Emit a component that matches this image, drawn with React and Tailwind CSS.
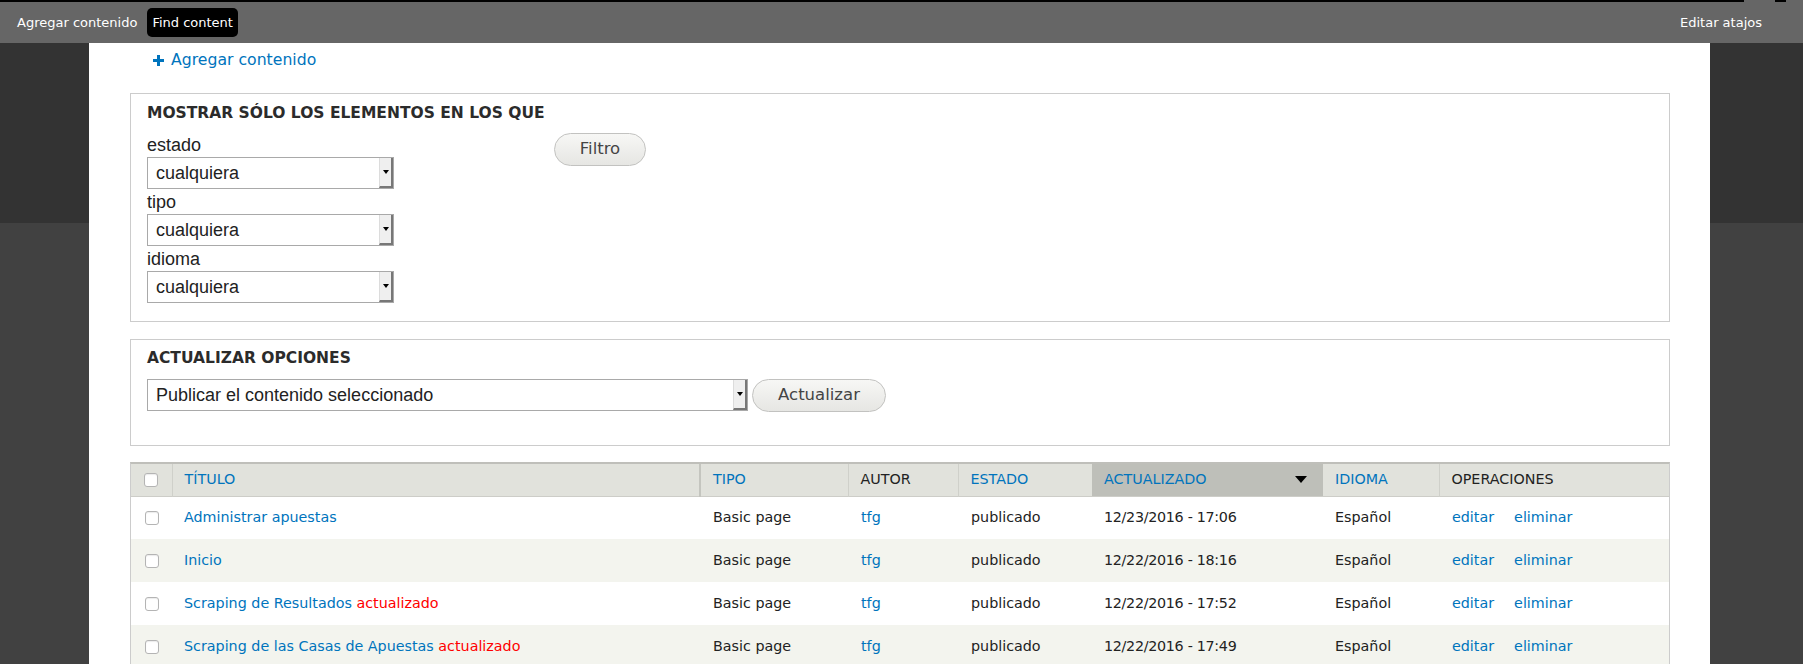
import React from 'react'

const rows = [
  { title: 'Administrar apuestas', updated: '12/23/2016 - 17:06', mark: false },
  { title: 'Inicio', updated: '12/22/2016 - 18:16', mark: false },
  { title: 'Scraping de Resultados', updated: '12/22/2016 - 17:52', mark: true },
  { title: 'Scraping de las Casas de Apuestas', updated: '12/22/2016 - 17:49', mark: true },
  { title: 'Home', updated: '12/22/2016 - 17:40', mark: false },
]

function Checkbox() {
  return (
    <div className="flex justify-center">
      <div className="w-[14px] h-[14px] rounded-[3px] border border-[#b4b4b4] bg-white shadow-[inset_0_1px_1px_rgba(0,0,0,0.08)]" />
    </div>
  )
}

function FakeSelect({ value, width }) {
  return (
    <div className={`flex h-[32px] ${width} border border-[#a9a9a9] bg-white`}>
      <div className="flex-1 flex items-center pl-[8px] font-['Liberation_Sans',Arial,sans-serif] text-[18px] text-[#222]">
        {value}
      </div>
      <div className="w-[14px] flex items-center justify-center bg-[#efefef] border-l border-l-[#dcdcdc] border-r-2 border-b-2 border-r-[#777] border-b-[#777]">
        <div className="w-0 h-0 border-l-[3px] border-r-[3px] border-t-[4px] border-l-transparent border-r-transparent border-t-black" />
      </div>
    </div>
  )
}

function Button({ children, width }) {
  return (
    <div className={`${width} h-[33px] flex items-center justify-center rounded-full border border-[#c2c2c0] bg-gradient-to-b from-[#f7f7f5] to-[#e6e6e3] text-[16.5px] text-[#444]`}>
      {children}
    </div>
  )
}

function Field({ label, className }) {
  return (
    <div className={className}>
      <div className="h-[20px] leading-[20px] font-['Liberation_Sans',Arial,sans-serif] text-[18px] text-[#222]">{label}</div>
      <div className="mt-[2px]">
        <FakeSelect value="cualquiera" width="w-[247px]" />
      </div>
    </div>
  )
}

function Side() {
  return (
    <div className="flex flex-col h-full">
      <div className="h-[180px] bg-[#333333]" />
      <div className="flex-1 bg-[#414141]" />
    </div>
  )
}

export default function App() {
  return (
    <div className="w-[1803px] h-[664px] overflow-hidden flex flex-col bg-[#414141] font-['DejaVu_Sans',sans-serif]">
      {/* toolbar */}
      <div className="flex h-[2px]">
        <div className="flex-1 bg-black" />
        <div className="w-[31px] bg-[#666]" />
        <div className="w-[11px] bg-black" />
        <div className="w-[17px] bg-[#666]" />
      </div>
      <div className="h-[41px] bg-[#666666] flex items-center pl-[17px] pr-[41px] text-[13px] text-white">
        <span>Agregar contenido</span>
        <span className="ml-[10px] h-[29px] px-[5px] flex items-center rounded-[5px] bg-black">Find content</span>
        <span className="ml-auto">Editar atajos</span>
      </div>

      <div className="flex flex-1 min-h-0">
        <div className="w-[89px]"><Side /></div>
        <main className="flex-1 bg-white pl-[41px] pr-[40px]">
          <div className="mt-[7px] h-[20px] pl-[23px] flex items-center text-[15.7px] text-[#0074bd]">
            <svg width="11" height="11" viewBox="0 0 11 11" className="mr-[7px]">
              <rect x="4" y="0" width="3" height="11" fill="#0074bd" />
              <rect x="0" y="4" width="11" height="3" fill="#0074bd" />
            </svg>
            Agregar contenido
          </div>

          {/* filter fieldset */}
          <div className="mt-[23px] border border-[#cccccc] pt-[9px] pl-[16px] pb-[18px]">
            <div className="h-[20px] leading-[20px] text-[15.5px] font-bold text-[#2b2b2b]">MOSTRAR SÓLO LOS ELEMENTOS EN LOS QUE</div>
            <div className="mt-[12px] flex items-start">
              <div>
                <Field label="estado" />
                <Field label="tipo" className="mt-[3px]" />
                <Field label="idioma" className="mt-[3px]" />
              </div>
              <div className="ml-[160px] -mt-[2px]">
                <Button width="w-[92px]">Filtro</Button>
              </div>
            </div>
          </div>

          {/* bulk update */}
          <div className="mt-[17px] border border-[#cccccc] pt-[8px] pl-[16px] pb-[33px]">
            <div className="h-[20px] leading-[20px] text-[15.5px] font-bold text-[#2b2b2b]">ACTUALIZAR OPCIONES</div>
            <div className="mt-[11px] flex items-start gap-[4px]">
              <FakeSelect value="Publicar el contenido seleccionado" width="w-[601px]" />
              <Button width="w-[134px]">Actualizar</Button>
            </div>
          </div>

          {/* content table */}
          <div className="mt-[16px] border-x border-[#cccccc] border-t-2 border-t-[#bfbfba]">
            <table className="w-[1538px] table-fixed border-collapse text-[14.3px] text-[#222]">
              <colgroup>
                <col className="w-[41px]" />
                <col className="w-[528px]" />
                <col className="w-[148px]" />
                <col className="w-[110px]" />
                <col className="w-[134px]" />
                <col className="w-[231px]" />
                <col className="w-[116px]" />
                <col className="w-[230px]" />
              </colgroup>
              <thead>
                <tr className="h-[32px] bg-[#e1e2dc] border-b border-[#cdcdc8]">
                  <th className="p-0 font-normal"><Checkbox /></th>
                  <th className="px-[12px] text-left font-normal text-[#0074bd] border-l border-[#cfd0ca]">TÍTULO</th>
                  <th className="px-[12px] text-left font-normal text-[#0074bd] border-l-2 border-[#c4c5bf]">TIPO</th>
                  <th className="px-[12px] text-left font-normal text-[#222] border-l border-[#cfd0ca]">AUTOR</th>
                  <th className="px-[12px] text-left font-normal text-[#0074bd] border-l border-[#cfd0ca]">ESTADO</th>
                  <th className="px-[12px] text-left font-normal text-[#0074bd] bg-[#bebfb9]">
                    <div className="flex items-center">
                      <span>ACTUALIZADO</span>
                      <span className="ml-auto mr-[4px] w-0 h-0 border-l-[6px] border-r-[6px] border-t-[7px] border-l-transparent border-r-transparent border-t-black" />
                    </div>
                  </th>
                  <th className="px-[12px] text-left font-normal text-[#0074bd]">IDIOMA</th>
                  <th className="px-[12px] text-left font-normal text-[#222] border-l border-[#cfd0ca]">OPERACIONES</th>
                </tr>
              </thead>
              <tbody>
                {rows.map((r, i) => (
                  <tr key={r.title} className={i % 2 === 1 ? 'h-[43px] bg-[#f3f4ee]' : 'h-[43px] bg-white'}>
                    <td className="p-0"><Checkbox /></td>
                    <td className="px-[12px]">
                      <span className="text-[#0074bd]">{r.title}</span>
                      {r.mark && <span className="text-[#ff0000]"> actualizado</span>}
                    </td>
                    <td className="px-[13px]">Basic page</td>
                    <td className="px-[13px] text-[#0074bd]">tfg</td>
                    <td className="px-[13px]">publicado</td>
                    <td className="px-[12px] tracking-[-0.3px]">{r.updated}</td>
                    <td className="px-[12px]">Español</td>
                    <td className="px-[13px]">
                      <span className="text-[#0074bd]">editar</span>
                      <span className="ml-[20px] text-[#0074bd]">eliminar</span>
                    </td>
                  </tr>
                ))}
              </tbody>
            </table>
          </div>
        </main>
        <div className="w-[93px]"><Side /></div>
      </div>
    </div>
  )
}
